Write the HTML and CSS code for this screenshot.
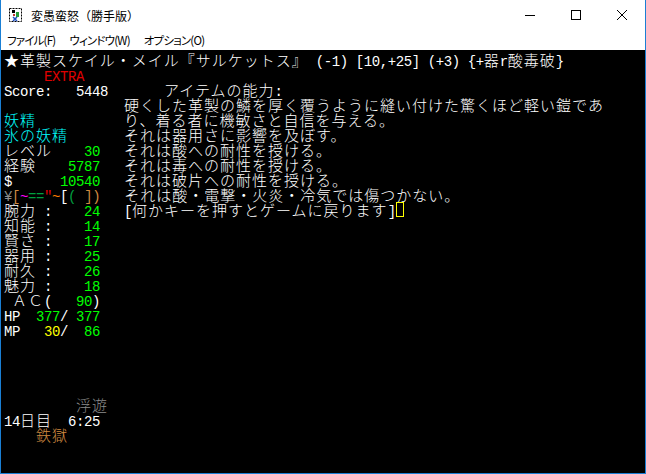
FILE: index.html
```html
<!DOCTYPE html>
<html lang="ja">
<head>
    <meta charset="UTF-8">
    <meta name="viewport" content="width=device-width, initial-scale=1.0">
    <title>変愚蛮怒（勝手版）</title>
    <link rel="stylesheet" href="styles.css">
</head>
<body>
    <div class="window">
        <!-- タイトルバー -->
        <div class="titlebar">
            <svg class="app_icon" width="16" height="16" viewBox="0 0 16 16">
                <rect x="1.5" y="1.5" width="12" height="13" fill="#fff" stroke="#000" stroke-dasharray="2 1"/>
                <path d="M4 3h3v3H4z" fill="#000"/>
                <path d="M8 5h3v5H8z" fill="#2a9d3a"/>
                <path d="M5 7h2v2H5z" fill="#c03030"/>
                <path d="M5 10l4 4M9 10l-4 4" stroke="#2050c0" stroke-width="1.5"/>
            </svg>
            <span class="title">変愚蛮怒（勝手版）</span>
            <div class="caption">
                <div class="cap_btn">
                    <svg width="10" height="10" viewBox="0 0 10 10"><path d="M0 5.5h10" stroke="#000"/></svg>
                </div>
                <div class="cap_btn">
                    <svg width="10" height="10" viewBox="0 0 10 10"><rect x="0.5" y="0.5" width="9" height="9" fill="none" stroke="#000"/></svg>
                </div>
                <div class="cap_btn">
                    <svg width="10" height="10" viewBox="0 0 10 10"><path d="M0 0L10 10M10 0L0 10" stroke="#000"/></svg>
                </div>
            </div>
        </div>

        <!-- メニューバー -->
        <ul class="menu">
            <li>ファイル(F)</li>
            <li>ウィンドウ(W)</li>
            <li>オプション(O)</li>
        </ul>

        <!-- 端末画面 (半角=8px, 全角=16px, 1行=15px) -->
        <div class="term">
            <div class="row">★革製スケイル・メイル『サルケットス』<span class="h"> (-1) [10,+25] (+3) {+</span>器<span class="h">r</span>酸毒破<span class="h">}</span></div>
            <div class="row"><span class="h r">     EXTRA</span></div>
            <div class="row"><span class="h">Score:   5448       </span>アイテムの能力<span class="h">:</span></div>
            <div class="row"><span class="h">               </span>硬くした革製の鱗を厚く覆うように縫い付けた驚くほど軽い鎧であ</div>
            <div class="row"><span class="c">妖精</span><span class="h">           </span>り、着る者に機敏さと自信を与える。</div>
            <div class="row"><span class="c">氷の妖精</span><span class="h">       </span>それは器用さに影響を及ぼす。</div>
            <div class="row">レベル<span class="h">    <span class="g">30</span>   </span>それは酸への耐性を授ける。</div>
            <div class="row">経験<span class="h">    <span class="g">5787</span>   </span>それは毒への耐性を授ける。</div>
            <div class="row"><span class="h">$      <span class="g">10540</span>   </span>それは破片への耐性を授ける。</div>
            <div class="row"><span class="h"><span class="s">¥</span><span class="u">[</span><span class="v">~</span><span class="dg">==</span><span class="r">"</span><span class="o">~</span>[<span class="dg">(</span> <span class="u">])</span>   </span>それは酸・電撃・火炎・冷気では傷つかない。</div>
            <div class="row">腕力<span class="h"> :    <span class="g">24</span>   [</span>何かキーを押すとゲームに戻ります<span class="h">]</span><span class="cursor"></span></div>
            <div class="row">知能<span class="h"> :    <span class="g">14</span></span></div>
            <div class="row">賢さ<span class="h"> :    <span class="g">17</span></span></div>
            <div class="row">器用<span class="h"> :    <span class="g">25</span></span></div>
            <div class="row">耐久<span class="h"> :    <span class="g">26</span></span></div>
            <div class="row">魅力<span class="h"> :    <span class="g">18</span></span></div>
            <div class="row"><span class="h"> </span>ＡＣ<span class="h">(   <span class="g">90</span>)</span></div>
            <div class="row"><span class="h">HP  <span class="g">377</span>/ <span class="g">377</span></span></div>
            <div class="row"><span class="h">MP   <span class="y">30</span>/  <span class="g">86</span></span></div>
            <div class="row"></div>
            <div class="row"></div>
            <div class="row"></div>
            <div class="row"></div>
            <div class="row"><span class="h">         </span><span class="s">浮遊</span></div>
            <div class="row"><span class="h">14</span>日目<span class="h">  6:25</span></div>
            <div class="row"><span class="h">    </span><span class="u">鉄獄</span></div>
        </div>
    </div>
</body>
</html>
```

FILE: styles.css
```css
*{
    margin: 0px;
    padding: 0px;
    list-style: none;
    box-sizing: border-box;
}
body{
    background: #ffffff;
}
.window{
    width: 646px;
    height: 474px;
    display: flex;
    flex-direction: column;
    border-left: 1px solid #1a7fd4;
    border-right: 1px solid #1a7fd4;
    border-bottom: 1px solid #1a7fd4;
    background: #ffffff;
}

/* タイトルバー */
.titlebar{
    height: 30px;
    display: flex;
    align-items: center;
    font-family: "Noto Sans CJK JP", sans-serif;
    font-size: 12px;
    color: #000000;
}
.app_icon{
    margin-left: 7px;
}
.title{
    margin-left: 7px;
}
.caption{
    margin-left: auto;
    display: flex;
    height: 30px;
}
.cap_btn{
    width: 46px;
    height: 30px;
    display: flex;
    align-items: center;
    justify-content: center;
}

/* メニューバー */
.menu{
    height: 20px;
    display: flex;
    align-items: center;
    font-family: "Noto Sans CJK JP", sans-serif;
    font-size: 11.5px;
    letter-spacing: -0.8px;
    font-feature-settings: "palt";
    color: #000000;
}
.menu>li{
    padding: 0px 7px 0px 6px;
    margin-right: 1px;
}

/* 端末 */
.term{
    flex: 1;
    background: #000000;
    padding: 2px 0px 0px 3px;
    color: #ffffff;
    font-family: "Noto Sans CJK JP", sans-serif;
    font-weight: 300;
    font-size: 15px;
    letter-spacing: 1px;
    line-height: 15px;
    overflow: hidden;
}
.term>.row{
    height: 15px;
    white-space: pre;
}
.term .h{
    font-family: "Liberation Mono", "DejaVu Sans Mono", monospace;
    font-weight: 400;
    font-size: 14px;
    letter-spacing: -0.4px;
}
.term .cursor{
    display: inline-block;
    width: 8px;
    height: 15px;
    border: 1px solid #ffff00;
    vertical-align: top;
}

/* 色 */
.r{ color: #e00000; }
.c{ color: #00ffff; }
.g{ color: #00ff00; }
.dg{ color: #00a040; }
.y{ color: #ffff00; }
.s{ color: #8c8c8c; }
.u{ color: #d08a40; }
.o{ color: #ff8000; }
.v{ color: #ff00ff; }
```
